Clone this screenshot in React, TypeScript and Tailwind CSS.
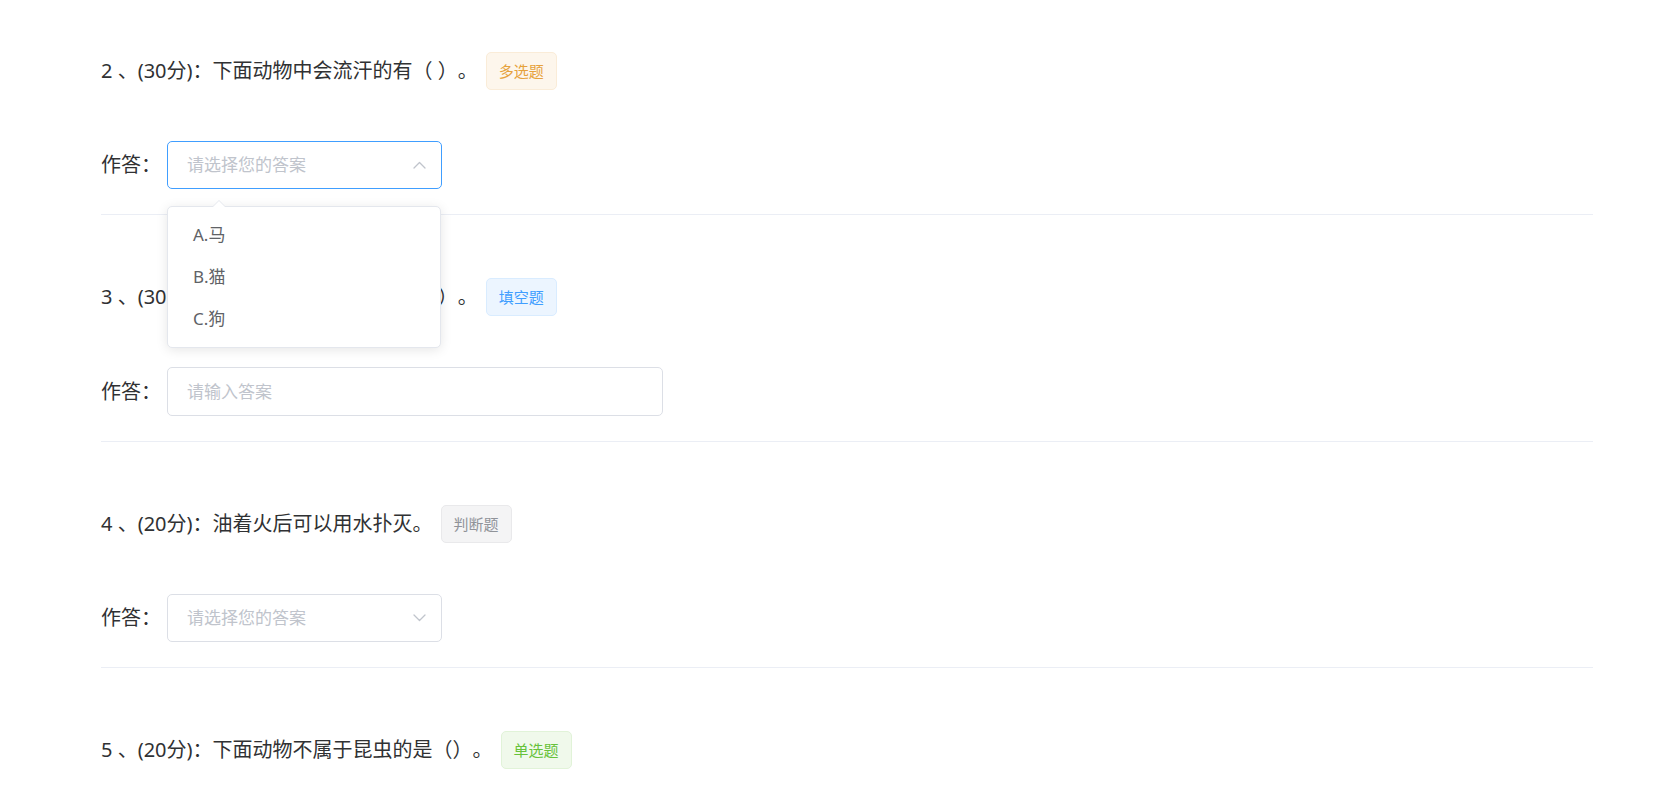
import { useState } from 'react';

type Question = {
    no: number;
    score: number;
    text: string;
    tag: string;
    tagClass: string;
    kind: 'select' | 'input';
    open?: boolean;
};

const questions: Question[] = [
    {
        no: 2,
        score: 30,
        text: '下面动物中会流汗的有（ ）。',
        tag: '多选题',
        tagClass: 'bg-[#fdf6ec] border-[#faecd8] text-[#e6a23c]',
        kind: 'select',
        open: true,
    },
    {
        no: 3,
        score: 30,
        text: '十二生肖中排第一的是（ ）。',
        tag: '填空题',
        tagClass: 'bg-[#ecf5ff] border-[#d9ecff] text-[#409eff]',
        kind: 'input',
    },
    {
        no: 4,
        score: 20,
        text: '油着火后可以用水扑灭。',
        tag: '判断题',
        tagClass: 'bg-[#f4f4f5] border-[#e9e9eb] text-[#909399]',
        kind: 'select',
    },
    {
        no: 5,
        score: 20,
        text: '下面动物不属于昆虫的是（）。',
        tag: '单选题',
        tagClass: 'bg-[#f0f9eb] border-[#e1f3d8] text-[#67c23a]',
        kind: 'select',
    },
];

const options = ['A.马', 'B.猫', 'C.狗'];

function Chevron({ up }: { up?: boolean }) {
    return (
        <svg width="13" height="8" viewBox="0 0 13 8" fill="none" className="absolute right-[15px] top-1/2 -translate-y-1/2">
            <path
                d={up ? 'M1 7L6.5 1.5L12 7' : 'M1 1L6.5 6.5L12 1'}
                stroke="#c0c4cc"
                strokeWidth="1.3"
                strokeLinecap="round"
                strokeLinejoin="round"
            />
        </svg>
    );
}

function AnswerSelect({ open }: { open?: boolean }) {
    return (
        <div className="relative">
            <div
                className={`relative flex h-[48px] w-[275px] items-center rounded-[5px] border bg-white pl-[19px] text-[17px] text-[#c0c4cc] ${
                    open ? 'border-[#409eff]' : 'border-[#dcdfe6]'
                }`}
            >
                请选择您的答案
                <Chevron up={open} />
            </div>

            {open && (
                <div className="absolute left-0 top-[calc(100%+17px)] z-20 w-[274px] rounded-[5px] border border-[#e4e7ed] bg-white py-[7px] shadow-[0_2px_12px_rgba(0,0,0,0.1)]">
                    {/* popper arrow */}
                    <span className="absolute -top-[7px] left-[44px] h-0 w-0 border-x-[7px] border-b-[7px] border-x-transparent border-b-[#e4e7ed]"></span>
                    <span className="absolute -top-[6px] left-[44px] h-0 w-0 border-x-[7px] border-b-[7px] border-x-transparent border-b-white"></span>
                    {options.map((o) => (
                        <div key={o} className="h-[42px] px-[25px] text-[17px] leading-[42px] text-[#606266]">
                            {o}
                        </div>
                    ))}
                </div>
            )}
        </div>
    );
}

export default function App() {
    const [answers, setAnswers] = useState<Record<number, string>>({});

    return (
        <div className="min-h-screen w-full overflow-hidden bg-white pl-[101px] pr-[62px] font-['Noto_Sans','Noto_Sans_CJK_SC',sans-serif] [text-spacing-trim:space-all]">
            {questions.map((q, i) => (
                <div
                    key={q.no}
                    className={`border-b border-[#ebeef5] pb-[25px] ${i === 0 ? 'pt-[52px]' : 'pt-[63px]'}`}
                >
                    <div className="flex items-center">
                        <span className="text-[20px] leading-[38px] text-[#303133]">
                            {q.no} 、({q.score}分)：{q.text}
                        </span>
                        <span
                            className={`ml-[8px] flex h-[38px] items-center rounded-[5px] border px-[12px] text-[15px] ${q.tagClass}`}
                        >
                            {q.tag}
                        </span>
                    </div>

                    <div className="mt-[51px] flex items-center">
                        <label className="w-[66px] text-[20px] text-[#303133]">作答：</label>
                        {q.kind === 'select' ? (
                            <AnswerSelect open={q.open} />
                        ) : (
                            <input
                                value={answers[q.no] ?? ''}
                                onChange={(e) => setAnswers({ ...answers, [q.no]: e.target.value })}
                                placeholder="请输入答案"
                                className="h-[49px] w-[496px] rounded-[5px] border border-[#dcdfe6] px-[19px] text-[17px] text-[#606266] outline-none placeholder:text-[#c0c4cc]"
                            />
                        )}
                    </div>
                </div>
            ))}
        </div>
    );
}
